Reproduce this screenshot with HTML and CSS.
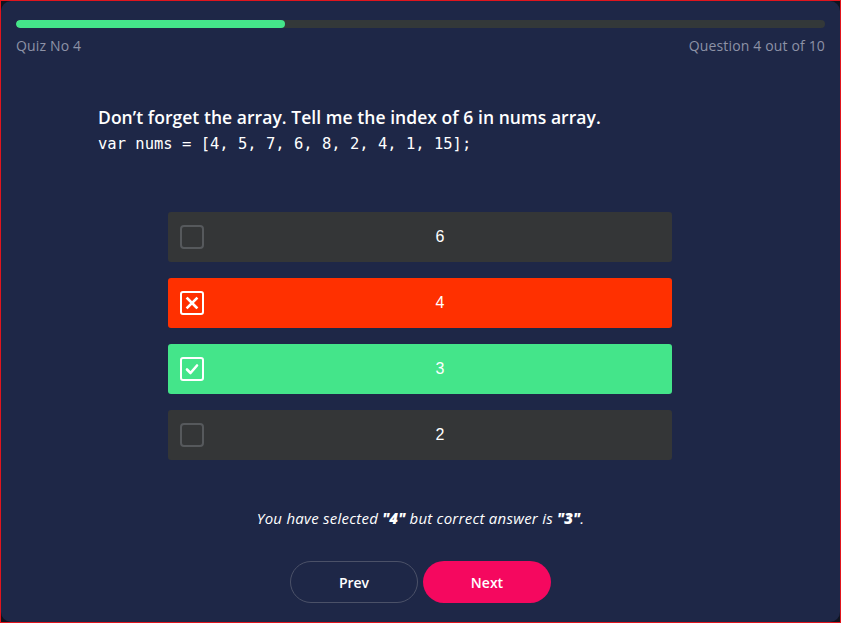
FILE: index.html
```html
<!DOCTYPE html>
<html>
<head>
<meta charset="utf-8">
<link rel="stylesheet" href="styles.css">
</head>
<body>
<div class="frame">
  <div class="card">
    <div class="progress"><div class="progress-fill" style="width:269px"></div></div>
    <div class="meta">
      <span>Quiz No 4</span>
      <span>Question 4 out of 10</span>
    </div>
    <div class="question">
      <h1 class="title">Don’t forget the array. Tell me the index of 6 in nums array.</h1>
      <pre class="code">var nums = [4, 5, 7, 6, 8, 2, 4, 1, 15];</pre>
    </div>
    <div class="options">
      <div class="option">
        <span class="box"></span>
        <span class="label">6</span>
      </div>
      <div class="option wrong">
        <span class="box">
          <svg width="16" height="16" viewBox="0 0 16 16"><path d="M3.5 3.5 L12.5 12.5 M12.5 3.5 L3.5 12.5" stroke="#fff" stroke-width="2.6" stroke-linecap="square"/></svg>
        </span>
        <span class="label">4</span>
      </div>
      <div class="option right">
        <span class="box">
          <svg width="16" height="16" viewBox="0 0 16 16"><path d="M3 8.5 L6.5 12 L13 4.5" fill="none" stroke="#fff" stroke-width="2.6" stroke-linecap="round" stroke-linejoin="round"/></svg>
        </span>
        <span class="label">3</span>
      </div>
      <div class="option">
        <span class="box"></span>
        <span class="label">2</span>
      </div>
    </div>
    <p class="feedback">You have selected <b>"4"</b> but correct answer is <b>"3"</b>.</p>
    <div class="actions">
      <button class="btn prev">Prev</button>
      <button class="btn next">Next</button>
    </div>
  </div>
</div>
</body>
</html>
```
FILE: styles.css
```css
html, body {
  margin: 0;
  padding: 0;
  background: #0e1120;
}
.frame {
  width: 841px;
  height: 623px;
  box-sizing: border-box;
  border: 1px solid #e0151d;
  background: #10131f;
}
.card {
  height: 100%;
  box-sizing: border-box;
  background: #1e2747;
  border-radius: 10px;
  padding: 19px 15px 0;
  font-family: "Open Sans", "Noto Sans", sans-serif;
  color: #fff;
}
.progress {
  height: 8px;
  border-radius: 4px;
  background: #333839;
  overflow: hidden;
}
.progress-fill {
  height: 100%;
  border-radius: 4px;
  background: #44e58a;
}
.meta {
  margin-top: 8px;
  display: flex;
  justify-content: space-between;
  font-size: 14px;
  line-height: 20px;
  color: #8d92a6;
  letter-spacing: 0.15px;
}
.question {
  margin-top: 49px;
  padding-left: 82px;
}
.title {
  margin: 0;
  font-size: 17.5px;
  line-height: 24px;
  font-weight: 600;
  letter-spacing: 0.05px;
}
.code {
  margin: 4px 0 0;
  font-family: "DejaVu Sans Mono", monospace;
  font-size: 15.5px;
  line-height: 22px;
  color: #fff;
}
.options {
  width: 504px;
  margin: 57px 0 0 152px;
  display: flex;
  flex-direction: column;
  gap: 16px;
}
.option {
  height: 50px;
  border-radius: 3px;
  background: #343637;
  display: flex;
  align-items: center;
  padding: 0 12px;
}
.option.wrong { background: #ff3000; }
.option.right { background: #44e58a; }
.box {
  width: 24px;
  height: 24px;
  box-sizing: border-box;
  border: 2px solid #56595c;
  border-radius: 4px;
  display: flex;
  align-items: center;
  justify-content: center;
  flex: none;
}
.wrong .box, .right .box {
  border-color: #fff;
  border-radius: 3px;
}
.label {
  flex: 1;
  text-align: center;
  font-family: "Liberation Sans", Arial, sans-serif;
  font-size: 16px;
  color: #fff;
  padding-left: 16px;
}
.feedback {
  margin: 48px 0 0;
  text-align: center;
  font-style: italic;
  font-size: 15px;
  line-height: 20px;
  letter-spacing: 0.25px;
}
.feedback b { font-weight: 800; }
.actions {
  margin-top: 33px;
  display: flex;
  justify-content: center;
  gap: 5px;
}
.btn {
  width: 128px;
  height: 42px;
  border-radius: 21px;
  font-family: "Open Sans", sans-serif;
  font-size: 14px;
  font-weight: 600;
  color: #fff;
  cursor: pointer;
}
.btn.prev {
  background: transparent;
  border: 1px solid #4b5168;
}
.btn.next {
  background: #f5085f;
  border: none;
}
```
